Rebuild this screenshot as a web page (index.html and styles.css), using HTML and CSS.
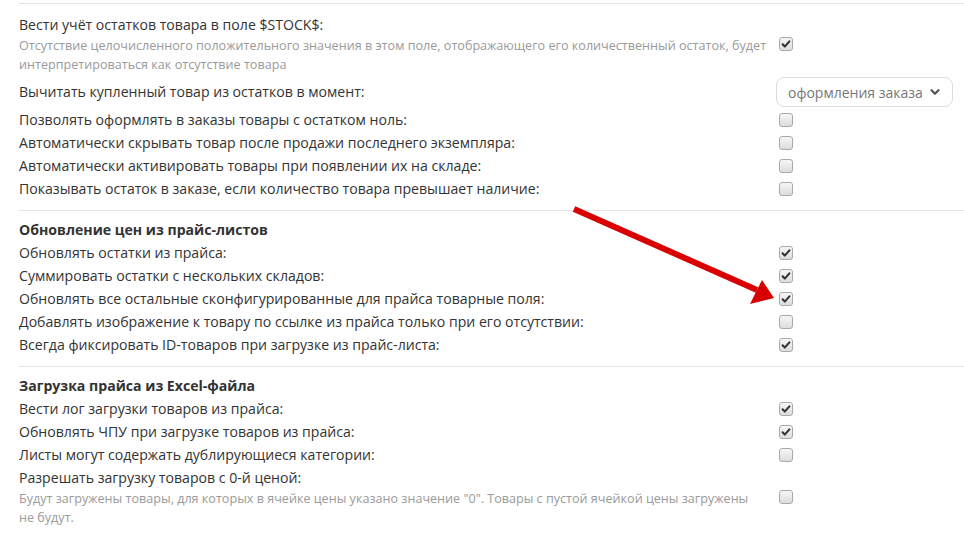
FILE: index.html
```html
<!DOCTYPE html>
<html lang="ru">
<head>
<meta charset="utf-8">
<link rel="stylesheet" href="styles.css">
</head>
<body>
<div class="page">
  <hr class="divider first">
  <section class="group">
    <div class="row tall">
      <div class="label">
        <div class="title">Вести учёт остатков товара в поле $STOCK$:</div>
        <div class="desc">Отсутствие целочисленного положительного значения в этом поле, отображающего его количественный остаток, будет интерпретироваться как отсутствие товара</div>
      </div>
      <div class="ctl"><span class="cb on"><svg viewBox="0 0 12 12"><path d="M2.6 6.3 L4.8 8.6 L9.4 3.4" fill="none" stroke="#333" stroke-width="2.1" stroke-linecap="round" stroke-linejoin="round"/></svg></span></div>
    </div>
    <div class="row select-row">
      <div class="label">Вычитать купленный товар из остатков в момент:</div>
      <div class="ctl"><div class="select"><span>оформления заказа</span><svg class="chev" viewBox="0 0 12 12"><path d="M2.5 4.2 L6 7.7 L9.5 4.2" fill="none" stroke="#555" stroke-width="2.2" stroke-linecap="round" stroke-linejoin="round"/></svg></div></div>
    </div>
    <div class="row"><div class="label">Позволять оформлять в заказы товары с остатком ноль:</div><div class="ctl"><span class="cb"></span></div></div>
    <div class="row"><div class="label">Автоматически скрывать товар после продажи последнего экземпляра:</div><div class="ctl"><span class="cb"></span></div></div>
    <div class="row"><div class="label">Автоматически активировать товары при появлении их на складе:</div><div class="ctl"><span class="cb"></span></div></div>
    <div class="row"><div class="label">Показывать остаток в заказе, если количество товара превышает наличие:</div><div class="ctl"><span class="cb"></span></div></div>
  </section>
  <hr class="divider">
  <section class="group">
    <div class="heading">Обновление цен из прайс-листов</div>
    <div class="row"><div class="label">Обновлять остатки из прайса:</div><div class="ctl"><span class="cb on"><svg viewBox="0 0 12 12"><path d="M2.6 6.3 L4.8 8.6 L9.4 3.4" fill="none" stroke="#333" stroke-width="2.1" stroke-linecap="round" stroke-linejoin="round"/></svg></span></div></div>
    <div class="row"><div class="label">Суммировать остатки с нескольких складов:</div><div class="ctl"><span class="cb on"><svg viewBox="0 0 12 12"><path d="M2.6 6.3 L4.8 8.6 L9.4 3.4" fill="none" stroke="#333" stroke-width="2.1" stroke-linecap="round" stroke-linejoin="round"/></svg></span></div></div>
    <div class="row"><div class="label">Обновлять все остальные сконфигурированные для прайса товарные поля:</div><div class="ctl"><span class="cb on"><svg viewBox="0 0 12 12"><path d="M2.6 6.3 L4.8 8.6 L9.4 3.4" fill="none" stroke="#333" stroke-width="2.1" stroke-linecap="round" stroke-linejoin="round"/></svg></span></div></div>
    <div class="row"><div class="label">Добавлять изображение к товару по ссылке из прайса только при его отсутствии:</div><div class="ctl"><span class="cb"></span></div></div>
    <div class="row"><div class="label">Всегда фиксировать ID-товаров при загрузке из прайс-листа:</div><div class="ctl"><span class="cb on"><svg viewBox="0 0 12 12"><path d="M2.6 6.3 L4.8 8.6 L9.4 3.4" fill="none" stroke="#333" stroke-width="2.1" stroke-linecap="round" stroke-linejoin="round"/></svg></span></div></div>
  </section>
  <hr class="divider">
  <section class="group">
    <div class="heading">Загрузка прайса из Excel-файла</div>
    <div class="row"><div class="label">Вести лог загрузки товаров из прайса:</div><div class="ctl"><span class="cb on"><svg viewBox="0 0 12 12"><path d="M2.6 6.3 L4.8 8.6 L9.4 3.4" fill="none" stroke="#333" stroke-width="2.1" stroke-linecap="round" stroke-linejoin="round"/></svg></span></div></div>
    <div class="row"><div class="label">Обновлять ЧПУ при загрузке товаров из прайса:</div><div class="ctl"><span class="cb on"><svg viewBox="0 0 12 12"><path d="M2.6 6.3 L4.8 8.6 L9.4 3.4" fill="none" stroke="#333" stroke-width="2.1" stroke-linecap="round" stroke-linejoin="round"/></svg></span></div></div>
    <div class="row"><div class="label">Листы могут содержать дублирующиеся категории:</div><div class="ctl"><span class="cb"></span></div></div>
    <div class="row tall last">
      <div class="label">
        <div class="title">Разрешать загрузку товаров с 0-й ценой:</div>
        <div class="desc">Будут загружены товары, для которых в ячейке цены указано значение "0". Товары с пустой ячейкой цены загружены не&nbsp;будут.</div>
      </div>
      <div class="ctl"><span class="cb"></span></div>
    </div>
  </section>
  <svg class="arrow" width="964" height="535" viewBox="0 0 964 535">
    <line x1="574" y1="209" x2="757" y2="290" stroke="#d80000" stroke-width="6"/>
    <polygon points="774,298 762,280 750,304" fill="#d80000"/>
  </svg>
</div>
</body>
</html>
```
FILE: styles.css
```css
html, body {
  margin: 0;
  padding: 0;
  background: #fff;
}
body {
  font-family: "Open Sans", "Noto Sans", sans-serif;
  font-size: 14.1px;
  color: #333;
}
.page {
  position: relative;
  width: 964px;
  height: 535px;
  overflow: hidden;
  padding: 3px 0 0 19px;
  box-sizing: border-box;
}
.divider {
  border: 0;
  border-top: 1px solid #e3e3e3;
  margin: 10px 0 0 0;
  height: 0;
}
.divider.first {
  margin-top: 0;
}
.group {
  display: flex;
  flex-direction: column;
  padding-top: 8px;
}
.group:first-of-type {
  padding-top: 10px;
}
.row {
  display: grid;
  grid-template-columns: 760px 1fr;
  align-items: center;
  min-height: 23px;
  line-height: 23px;
}
.row.tall .title {
  line-height: 22px;
}
.row.tall .desc {
  font-size: 12.6px;
  line-height: 19px;
  color: #9a9a9a;
}
.row.last .title {
  line-height: 23px;
}
.select-row {
  margin-top: 3px;
  min-height: 31px;
  align-items: start;
}
.select-row .label {
  line-height: 30px;
}
.heading {
  font-weight: bold;
  line-height: 22px;
}
.ctl {
  display: flex;
  align-items: center;
}
.cb {
  display: inline-block;
  width: 12px;
  height: 12px;
  border: 1px solid #a9a9a9;
  border-radius: 3px;
  background: linear-gradient(#f6f6f6, #dcdcdc);
  box-sizing: content-box;
}
.cb svg {
  display: block;
  width: 12px;
  height: 12px;
}
.select {
  margin-left: -3px;
  width: 177px;
  height: 30px;
  box-sizing: border-box;
  border: 1px solid #ddd;
  border-radius: 8px;
  display: flex;
  align-items: center;
  padding: 0 0 0 11px;
  color: #777;
  font-size: 14px;
  white-space: nowrap;
}
.chev {
  width: 12px;
  height: 12px;
  margin-left: 6px;
}
.arrow {
  position: absolute;
  left: 0;
  top: 0;
  pointer-events: none;
}
```
